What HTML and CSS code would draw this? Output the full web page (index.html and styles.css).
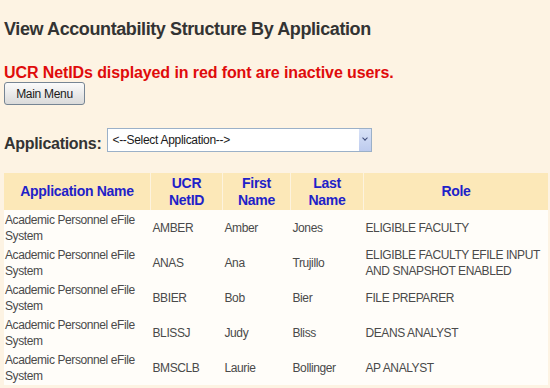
FILE: index.html
```html
<!DOCTYPE html>
<html lang="en">

<head>
    <meta charset="UTF-8">
    <title>View Accountability Structure By Application</title>
    <link rel="stylesheet" href="styles.css">
</head>

<body>

    <!-- Judul -->
    <h1 class="title">View Accountability Structure By Application</h1>
    <p class="warning">UCR NetIDs displayed in red font are inactive users.</p>
    <button class="btn">Main Menu</button>

    <!-- Pilih aplikasi -->
    <div class="filter">
        <label for="app">Applications:</label>
        <span class="select-wrap">
            <select id="app">
                <option>&lt;--Select Application--&gt;</option>
            </select>
        </span>
    </div>

    <table id="tabelRole">
        <thead>
            <tr>
                <th class="c-app">Application Name</th>
                <th class="c-id">UCR NetID</th>
                <th class="c-first">First Name</th>
                <th class="c-last">Last Name</th>
                <th class="c-role">Role</th>
            </tr>
        </thead>
        <tbody>
            <tr>
                <td>Academic Personnel eFile System</td>
                <td>AMBER</td>
                <td>Amber</td>
                <td>Jones</td>
                <td>ELIGIBLE FACULTY</td>
            </tr>
            <tr>
                <td>Academic Personnel eFile System</td>
                <td>ANAS</td>
                <td>Ana</td>
                <td>Trujillo</td>
                <td>ELIGIBLE FACULTY EFILE INPUT AND SNAPSHOT ENABLED</td>
            </tr>
            <tr>
                <td>Academic Personnel eFile System</td>
                <td>BBIER</td>
                <td>Bob</td>
                <td>Bier</td>
                <td>FILE PREPARER</td>
            </tr>
            <tr>
                <td>Academic Personnel eFile System</td>
                <td>BLISSJ</td>
                <td>Judy</td>
                <td>Bliss</td>
                <td>DEANS ANALYST</td>
            </tr>
            <tr>
                <td>Academic Personnel eFile System</td>
                <td>BMSCLB</td>
                <td>Laurie</td>
                <td>Bollinger</td>
                <td>AP ANALYST</td>
            </tr>
        </tbody>
    </table>

</body>

</html>
```

FILE: styles.css
```css
body {
    margin: 0;
    padding: 0 2px 0 4px;
    background: #fdf3e3;
    font-family: 'Liberation Sans', Arial, sans-serif;
    color: #4a4a4a;
}

.title {
    margin: 19px 0 0;
    font-size: 18px;
    line-height: 20px;
    letter-spacing: -0.4px;
    color: #333;
}

.warning {
    margin: 24px 0 0;
    font-size: 16px;
    line-height: 19px;
    letter-spacing: -0.1px;
    font-weight: bold;
    color: #e00b0b;
}

/* Tombol */
.btn {
    display: block;
    width: 81px;
    height: 23px;
    padding: 0;
    font-family: inherit;
    font-size: 12px;
    letter-spacing: -0.3px;
    color: #1a1a1a;
    background: linear-gradient(#fbfbfb, #dadada);
    border: 1px solid #768594;
    border-radius: 3px;
}

/* Filter aplikasi */
.filter {
    display: flex;
    align-items: flex-start;
    gap: 6px;
    margin-top: 23px;
}

.filter label {
    margin-top: 6px;
    font-size: 16px;
    line-height: 20px;
    letter-spacing: -0.3px;
    font-weight: bold;
    color: #333;
}

.select-wrap {
    position: relative;
    display: block;
}

.select-wrap select {
    display: block;
    width: 265px;
    height: 24px;
    padding: 0 0 0 4px;
    font-family: inherit;
    font-size: 12px;
    letter-spacing: -0.3px;
    color: #1a1a1a;
    background: #fff;
    border: 1px solid #9bb0c8;
    border-radius: 0;
    appearance: none;
    -webkit-appearance: none;
}

.select-wrap::after {
    content: "";
    position: absolute;
    top: 1px;
    right: 1px;
    width: 12px;
    height: 22px;
    background: linear-gradient(#d8e2f7, #bdcbee);
    pointer-events: none;
}

.select-wrap::before {
    content: "";
    position: absolute;
    top: 8px;
    right: 5px;
    width: 3px;
    height: 3px;
    border-right: 1.5px solid #3c4a78;
    border-bottom: 1.5px solid #3c4a78;
    transform: rotate(45deg);
    z-index: 1;
    pointer-events: none;
}

/* Tabel */
table {
    width: 544px;
    margin-top: 19px;
    border-collapse: collapse;
    table-layout: fixed;
}

th {
    background: #fce8b8;
    color: #1f22c8;
    font-size: 14px;
    line-height: 17px;
    letter-spacing: -0.3px;
    height: 37px;
    padding: 0 4px;
    border-right: 1px solid #fdf3de;
    text-align: center;
}

th:last-child {
    border-right: none;
}

.c-app { width: 138px; }
.c-id { width: 63px; }
.c-first { width: 59px; }
.c-last { width: 64px; }

td {
    background: #fffdf9;
    font-size: 12px;
    line-height: 16px;
    letter-spacing: -0.4px;
    height: 35px;
    padding: 0 3px 0 1px;
    vertical-align: middle;
}

td:nth-child(n+2) {
    padding-left: 2px;
}
```
